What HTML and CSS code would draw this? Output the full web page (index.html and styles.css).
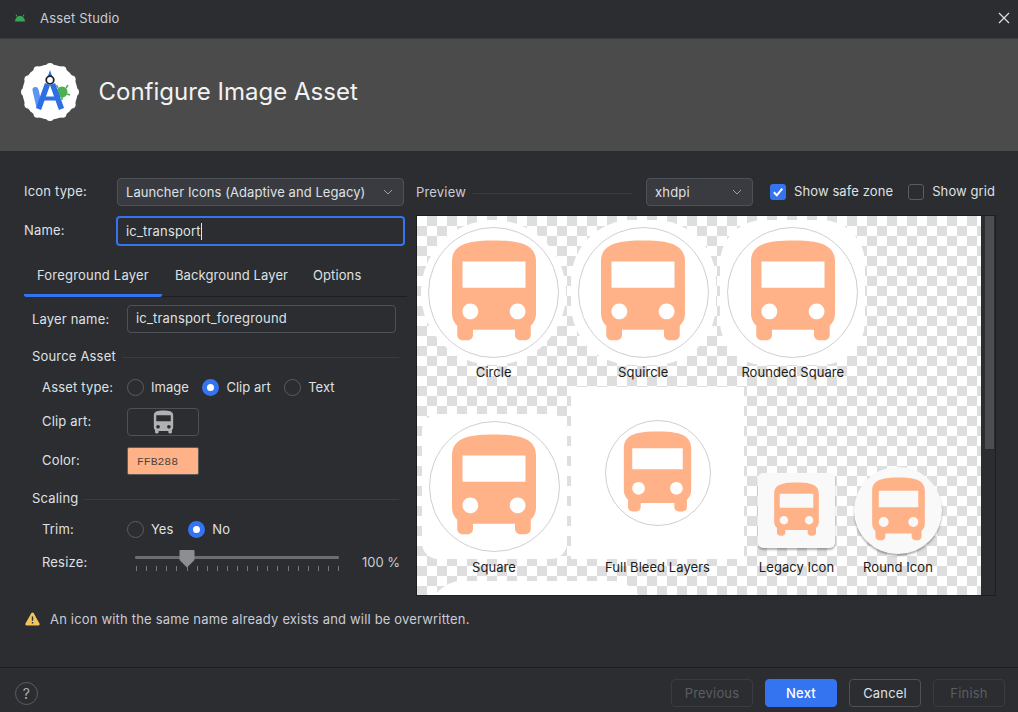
FILE: index.html
```html
<!DOCTYPE html>
<html>
<head>
    <title>Asset Studio</title>
    <link rel="stylesheet" href="styles.css">
</head>
<body>
    <svg class="defs" width="0" height="0">
        <symbol id="bus" viewBox="0 0 24 24">
            <path fill-rule="evenodd" d="M4 16c0 .88.39 1.67 1 2.22V20c0 .55.45 1 1 1h1c.55 0 1-.45 1-1v-1h8v1c0 .55.45 1 1 1h1c.55 0 1-.45 1-1v-1.78c.61-.55 1-1.34 1-2.22V6c0-3.5-3.58-4-8-4s-8 .5-8 4v10zm3.500 1c-.83 0-1.500-.67-1.500-1.500S6.670 14 7.500 14s1.500.67 1.500 1.500S8.330 17 7.500 17zm9 0c-.83 0-1.500-.67-1.500-1.500s.67-1.500 1.500-1.500 1.500.67 1.500 1.500-.67 1.500-1.500 1.500zm1.500-6H6V6h12v5z"/>
        </symbol>
    </svg>

    <div class="window">
        <div class="titlebar">
            <svg class="android-icon" width="12" height="9" viewBox="0 0 12 9">
                <path fill="#3aa655" d="M1 8.500C1 5.600 3.200 3 6 3s5 2.600 5 5.500z"/>
                <path stroke="#3aa655" stroke-width="1" d="M3.200 3.800 2 1.500M8.800 3.800 10 1.500"/>
            </svg>
            <span class="titlebar-text">Asset Studio</span>
            <svg class="close-icon" width="12" height="12" viewBox="0 0 12 12">
                <path stroke="#dfe1e5" stroke-width="1.200" d="M1 1l10 10M11 1 1 11"/>
            </svg>
        </div>

        <div class="header">
            <svg class="logo" width="60" height="60" viewBox="0 0 60 60">
                <g fill="#fff">
                    <circle cx="30" cy="30" r="27.500"/>
                    <circle cx="30" cy="5" r="4"/><circle cx="42.500" cy="8.350" r="4"/><circle cx="51.650" cy="17.500" r="4"/>
                    <circle cx="55" cy="30" r="4"/><circle cx="51.650" cy="42.500" r="4"/><circle cx="42.500" cy="51.650" r="4"/>
                    <circle cx="30" cy="55" r="4"/><circle cx="17.500" cy="51.650" r="4"/><circle cx="8.350" cy="42.500" r="4"/>
                    <circle cx="5" cy="30" r="4"/><circle cx="8.350" cy="17.500" r="4"/><circle cx="17.500" cy="8.350" r="4"/>
                </g>
                <circle cx="42" cy="30" r="5.500" fill="#4caf50"/>
                <path d="M38 26l-1.500-3M46 26l2-3M47 32l3 1M42 35v3" stroke="#4caf50" stroke-width="1.500"/>
                <path d="M15.500 28 19 43" stroke="#5b96f6" stroke-width="6" stroke-linecap="round"/>
                <path d="M30 8l3 9h-6z" fill="#2f6fe6"/>
                <path d="M27.500 22 18.500 47M32.500 22 41.500 47" stroke="#2f6fe6" stroke-width="5.500"/>
                <path d="M22 36.500H38" stroke="#2f6fe6" stroke-width="4"/>
                <circle cx="30" cy="18" r="3.800" fill="#fff" stroke="#222" stroke-width="1.800"/>
            </svg>
            <h1 class="header-title">Configure Image Asset</h1>
        </div>

        <div class="content">
            <div class="columns">
                <div class="form-col">
                    <div class="top-row">
                        <label class="top-label">Icon type:</label>
                        <div class="select select-wide">
                            <span>Launcher Icons (Adaptive and Legacy)</span>
                            <svg class="chevron" width="10" height="6" viewBox="0 0 10 6"><path d="M1 1l4 4 4-4"/></svg>
                        </div>
                    </div>
                    <div class="top-row name-row">
                        <label class="top-label">Name:</label>
                        <div class="name-input"><span>ic_transport</span><i class="caret"></i></div>
                    </div>

                    <div class="tabs">
                        <div class="tab tab-active">Foreground Layer</div>
                        <div class="tab tab-background">Background Layer</div>
                        <div class="tab">Options</div>
                    </div>

                    <div class="tab-pane">
                        <div class="layer-row">
                            <label class="layer-label">Layer name:</label>
                            <div class="text-input">ic_transport_foreground</div>
                        </div>

                        <div class="section section-source"><span>Source Asset</span><i></i></div>
                        <div class="row row-asset">
                            <label class="row-label">Asset type:</label>
                            <div class="radio-group">
                                <span class="radio"></span><span class="radio-text">Image</span>
                                <span class="radio radio-on"></span><span class="radio-text">Clip art</span>
                                <span class="radio"></span><span class="radio-text">Text</span>
                            </div>
                        </div>
                        <div class="row row-clip">
                            <label class="row-label">Clip art:</label>
                            <div class="clip-button">
                                <svg width="29" height="29" class="clip-bus"><use href="#bus"/></svg>
                            </div>
                        </div>
                        <div class="row row-color">
                            <label class="row-label">Color:</label>
                            <div class="color-swatch">FFB288</div>
                        </div>

                        <div class="section section-scaling"><span>Scaling</span><i></i></div>
                        <div class="row row-trim">
                            <label class="row-label">Trim:</label>
                            <div class="radio-group">
                                <span class="radio"></span><span class="radio-text">Yes</span>
                                <span class="radio radio-on"></span><span class="radio-text">No</span>
                            </div>
                        </div>
                        <div class="row row-resize">
                            <label class="row-label">Resize:</label>
                            <div class="slider">
                                <div class="slider-track"></div>
                                <div class="slider-ticks"></div>
                                <svg class="slider-thumb" width="16" height="18" viewBox="0 0 16 18">
                                    <path d="M1.500 0h13q1 0 1 1v9L8 17.500.5 10V1q0-1 1-1z" fill="#8c8e90"/>
                                </svg>
                            </div>
                            <span class="slider-value">100 %</span>
                        </div>
                    </div>
                </div>

                <div class="preview-col">
                    <div class="preview-top">
                        <div class="section preview-title"><span>Preview</span><i></i></div>
                        <div class="select select-density">
                            <span>xhdpi</span>
                            <svg class="chevron" width="10" height="6" viewBox="0 0 10 6"><path d="M1 1l4 4 4-4"/></svg>
                        </div>
                        <span class="checkbox checkbox-on">
                            <svg width="16" height="16" viewBox="0 0 16 16"><path d="M3.800 8.300l3 3 5.500-6.600" fill="none" stroke="#fff" stroke-width="2"/></svg>
                        </span>
                        <span class="check-text">Show safe zone</span>
                        <span class="checkbox checkbox-grid"></span>
                        <span class="check-text">Show grid</span>
                    </div>

                    <div class="preview-box">
                        <div class="canvas">
                            <div class="canvas-row canvas-row-first">
                                <div class="cell cell-top">
                                    <div class="shape shape-circle"><div class="safe-zone"><svg class="bus bus-lg"><use href="#bus"/></svg></div></div>
                                    <div class="cell-label">Circle</div>
                                </div>
                                <div class="cell cell-top">
                                    <div class="shape shape-squircle"><div class="safe-zone"><svg class="bus bus-lg"><use href="#bus"/></svg></div></div>
                                    <div class="cell-label">Squircle</div>
                                </div>
                                <div class="cell cell-top">
                                    <div class="shape shape-rounded"><div class="safe-zone"><svg class="bus bus-lg"><use href="#bus"/></svg></div></div>
                                    <div class="cell-label">Rounded Square</div>
                                </div>
                            </div>
                            <div class="canvas-row canvas-row-second">
                                <div class="cell cell-square">
                                    <div class="shape shape-square"><div class="safe-zone"><svg class="bus bus-lg"><use href="#bus"/></svg></div></div>
                                    <div class="cell-label">Square</div>
                                </div>
                                <div class="cell cell-bleed">
                                    <div class="shape shape-bleed"><div class="safe-zone safe-zone-md"><svg class="bus bus-md"><use href="#bus"/></svg></div></div>
                                    <div class="cell-label">Full Bleed Layers</div>
                                </div>
                                <div class="cell cell-legacy">
                                    <div class="shape shape-legacy"><svg class="bus bus-sm"><use href="#bus"/></svg></div>
                                    <div class="cell-label">Legacy Icon</div>
                                </div>
                                <div class="cell cell-round">
                                    <div class="shape shape-round"><svg class="bus bus-round"><use href="#bus"/></svg></div>
                                    <div class="cell-label">Round Icon</div>
                                </div>
                            </div>
                            <div class="shape shape-next"></div>
                        </div>
                        <div class="scrollbar"><div class="scrollbar-thumb"></div></div>
                    </div>
                </div>
            </div>

            <div class="warning">
                <svg width="15" height="14" viewBox="0 0 15 14">
                    <path d="M6.400 1.100a1.300 1.300 0 0 1 2.200 0l5.900 10.500a1.300 1.300 0 0 1-1.100 1.900H1.600a1.300 1.300 0 0 1-1.100-1.900z" fill="#f2c55c"/>
                    <path d="M6.800 4.500h1.400v4.300H6.800zM6.800 9.900h1.400v1.500H6.800z" fill="#2b2d30"/>
                </svg>
                <span>An icon with the same name already exists and will be overwritten.</span>
            </div>
        </div>

        <div class="footer">
            <div class="help">?</div>
            <div class="footer-buttons">
                <button class="btn btn-disabled btn-prev">Previous</button>
                <button class="btn btn-primary">Next</button>
                <button class="btn">Cancel</button>
                <button class="btn btn-disabled">Finish</button>
            </div>
        </div>
    </div>
</body>
</html>
```

FILE: styles.css
```css
* {
    box-sizing: border-box;
}

body {
    margin: 0;
    background-color: #2b2d30;
    color: #dfe1e5;
    font-family: Inter, "Noto Sans", sans-serif;
    font-size: 13px;
    line-height: 14px;
    letter-spacing: 0.18px;
}

.defs {
    position: absolute;
}

.window {
    width: 1018px;
    height: 712px;
    display: flex;
    flex-direction: column;
    overflow: hidden;
}

/* title bar */
.titlebar {
    height: 39px;
    flex: none;
    display: flex;
    align-items: center;
    padding: 0 8px 3px 14px;
    border-bottom: 1px solid #393b40;
}

.titlebar-text {
    margin-left: 14px;
    color: #c9ccd6;
}

.close-icon {
    margin-left: auto;
}

/* header */
.header {
    height: 112px;
    flex: none;
    display: flex;
    align-items: center;
    padding: 0 0 6px 20px;
    background-color: #4b4b4b;
}

.header-title {
    margin: 0 0 0 18.500px;
    font-size: 24px;
    line-height: 28px;
    font-weight: 400;
    letter-spacing: 0;
    color: #f2f2f2;
}

/* main area */
.content {
    flex: 1;
    padding-top: 27px;
}

.columns {
    display: flex;
}

.form-col {
    width: 416px;
    flex: none;
    padding-left: 24px;
}

.top-row {
    display: flex;
    align-items: center;
    height: 28px;
}

.name-row {
    height: 30px;
    margin-top: 10px;
}

.top-label {
    width: 92px;
    flex: none;
    margin-top: -2px;
}

.select {
    display: flex;
    align-items: center;
    justify-content: space-between;
    height: 28px;
    padding: 0 10px 0 8px;
    background-color: #393b40;
    border: 1px solid #4e5157;
    border-radius: 4px;
}

.select-wide {
    width: 287px;
    margin-left: 1px;
    letter-spacing: 0.07px;
}

.select-density {
    width: 107px;
    flex: none;
}

.chevron path {
    fill: none;
    stroke: #9da0a8;
    stroke-width: 1;
}

.name-input {
    width: 289px;
    height: 30px;
    display: flex;
    align-items: center;
    padding-left: 8px;
    border: 2px solid #3574f0;
    border-radius: 4px;
}

.caret {
    width: 1px;
    height: 17px;
    background-color: #dfe1e5;
}

/* tabs */
.tabs {
    display: flex;
    width: 383px;
    height: 42px;
    margin-top: 9px;
    border-bottom: 1px solid #1e1f22;
}

.tab {
    padding: 13px 0 0 13px;
    height: 42px;
    white-space: nowrap;
    letter-spacing: 0.1px;
}

.tab-active {
    width: 138px;
    border-bottom: 3px solid #3574f0;
    border-radius: 0 0 2px 2px;
    letter-spacing: 0.2px;
}

.tab-background {
    width: 138px;
}

.tab-pane {
    padding-left: 8px;
    width: 375px;
}

.layer-row {
    display: flex;
    align-items: center;
    height: 28px;
    margin-top: 8px;
}

.layer-label {
    width: 95px;
    flex: none;
}

.text-input {
    width: 269px;
    height: 28px;
    padding: 5px 8px;
    border: 1px solid #4e5157;
    border-radius: 4px;
}

/* titled separators */
.section {
    display: flex;
    align-items: center;
}

.section i {
    flex: 1;
    height: 1px;
    margin: 2px 0 0 6px;
    background-color: #393b40;
}

.section-source {
    margin-top: 16px;
}

.section-scaling {
    margin-top: 16px;
}

/* form rows */
.row {
    display: flex;
    align-items: center;
    height: 28px;
    padding-left: 10px;
}

.row-label {
    width: 85px;
    flex: none;
}

.row-asset {
    margin-top: 10px;
}

.row-clip {
    margin-top: 7px;
}

.row-color {
    margin-top: 11px;
}

.row-clip .row-label,
.row-color .row-label {
    margin-top: -2px;
}

.row-trim {
    margin-top: 10px;
}

.row-resize {
    margin-top: 5px;
}

.radio-group {
    display: flex;
    align-items: center;
}

.radio {
    width: 17px;
    height: 17px;
    flex: none;
    border: 1px solid #5a5d63;
    border-radius: 50%;
}

.radio-on {
    border: 5px solid #3574f0;
    background-color: #fff;
}

.radio-text {
    margin: 0 13.500px 0 7px;
    letter-spacing: 0.03px;
}

.row-trim .radio-text {
    margin-right: 15px;
}

.clip-button {
    width: 72px;
    height: 28px;
    display: flex;
    align-items: center;
    justify-content: center;
    border: 1px solid #4e5157;
    border-radius: 4px;
}

.clip-bus {
    flex: none;
    fill: #afb1b3;
}

.color-swatch {
    width: 72px;
    height: 28px;
    padding: 8px 9px;
    background-color: #ffb288;
    border: 1px solid #5e5a58;
    border-radius: 2px;
    color: #4d4540;
    font-family: "Liberation Mono", monospace;
    font-size: 11.400px;
    line-height: 13px;
    letter-spacing: 0;
}

/* slider */
.slider {
    position: relative;
    width: 204px;
    height: 28px;
    flex: none;
    margin-left: 8px;
}

.slider-track {
    height: 3px;
    margin-top: 8px;
    background-color: #6b6d70;
    border-radius: 1px;
}

.slider-ticks {
    height: 5px;
    margin-top: 7px;
    margin-left: 1px;
    background-image: repeating-linear-gradient(to right, #77797c 0, #77797c 1px, transparent 1px, transparent 10.100px);
}

.slider-thumb {
    position: absolute;
    left: 44px;
    top: 2px;
}

.slider-value {
    margin-left: 23px;
    flex: none;
    white-space: nowrap;
    letter-spacing: 0;
    color: #c9ccd6;
}

/* preview column */
.preview-col {
    width: 580px;
    flex: none;
}

.preview-top {
    display: flex;
    align-items: center;
    height: 28px;
}

.preview-title {
    width: 216px;
    flex: none;
    margin-right: 14px;
    color: #c9ccd6;
}

.preview-title i {
    margin-left: 7px;
}

.checkbox {
    width: 16px;
    height: 16px;
    flex: none;
    margin-left: 17px;
    border: 1px solid #5a5d63;
    border-radius: 3px;
}

.checkbox-on {
    border: 0;
    background-color: #3574f0;
}

.checkbox-on svg {
    display: block;
}

.checkbox-grid {
    margin-left: 15px;
}

.check-text {
    margin-left: 8px;
    margin-top: -2px;
    white-space: nowrap;
    letter-spacing: 0.1px;
}

.preview-box {
    display: flex;
    height: 381px;
    margin-top: 9px;
    border: 1px solid #1e1f22;
}

.canvas {
    width: 564px;
    height: 379px;
    flex: none;
    overflow: hidden;
    color: #1b1b1b;
    letter-spacing: 0.05px;
    background-color: #fff;
    background-image: conic-gradient(#dedede 25%, #fff 0 50%, #dedede 0 75%, #fff 0);
    background-size: 20px 20px;
}

.scrollbar {
    flex: 1;
    padding-left: 4px;
    padding-right: 1px;
    background-color: #2b2d30;
}

.scrollbar-thumb {
    height: 233px;
    background-color: #4c4d51;
}

/* preview cells */
.canvas-row {
    display: flex;
}

.canvas-row-first {
    padding: 4px 0 0 2px;
}

.canvas-row-second {
    align-items: flex-end;
    margin-top: 8px;
    padding-left: 4px;
}

.cell {
    display: flex;
    flex-direction: column;
    align-items: center;
    flex: none;
}

.cell-top {
    width: 149.500px;
}

.cell-square {
    width: 146px;
}

.cell-bleed {
    width: 173px;
    margin-left: 4px;
}

.cell-legacy {
    width: 77px;
    margin-left: 14px;
}

.cell-round {
    width: 88px;
    margin-left: 19px;
}

.cell-label {
    height: 14px;
    white-space: nowrap;
}

.shape {
    display: flex;
    align-items: center;
    justify-content: center;
    width: 145px;
    height: 145px;
    flex: none;
    background-color: #fff;
}

.shape-circle {
    border-radius: 50%;
}

.shape-squircle {
    border-radius: 42%;
}

.shape-rounded {
    border-radius: 30%;
}

.shape-square {
    margin-bottom: 1px;
    border-radius: 16px;
}

.shape-bleed {
    width: 173px;
    height: 172px;
    margin-bottom: 1px;
}

.shape-legacy {
    width: 77px;
    height: 75px;
    margin-bottom: 12px;
    border-radius: 5px;
    background-color: #f9f9f9;
    box-shadow: 0 2px 2px rgba(0, 0, 0, 0.3);
}

.shape-round {
    width: 88px;
    height: 87px;
    margin-bottom: 6px;
    border-radius: 50%;
    background-color: #f9f9f9;
    box-shadow: 0 2px 2px rgba(0, 0, 0, 0.3);
}

.shape-next {
    width: 214px;
    height: 198px;
    margin: 7px 0 0 13px;
    border-radius: 32px;
}

.safe-zone {
    display: flex;
    align-items: center;
    justify-content: center;
    width: 131px;
    height: 131px;
    flex: none;
    border: 1px solid #cfcfcf;
    border-radius: 50%;
}

.safe-zone-md {
    width: 106px;
    height: 106px;
}

.bus {
    fill: #ffb288;
    flex: none;
}

.bus-lg {
    width: 126px;
    height: 126px;
}

.bus-md {
    width: 101px;
    height: 101px;
}

.bus-sm {
    width: 67px;
    height: 67px;
}

.bus-round {
    width: 79px;
    height: 79px;
}

/* warning */
.warning {
    display: flex;
    align-items: center;
    margin-top: 16px;
    padding-left: 25px;
}

.warning span {
    margin-left: 10px;
    color: #c9ccd6;
}

/* footer */
.footer {
    height: 45px;
    flex: none;
    display: flex;
    align-items: center;
    justify-content: space-between;
    padding: 11px 13px 5px 15px;
    border-top: 1px solid #1e1f22;
}

.help {
    width: 23px;
    height: 23px;
    border: 1px solid #5a5d63;
    border-radius: 50%;
    text-align: center;
    line-height: 21px;
    font-size: 14px;
    color: #a8adbd;
}

.footer-buttons {
    display: flex;
    gap: 12px;
}

.btn {
    width: 72px;
    height: 28px;
    padding: 0;
    background: none;
    border: 1px solid #4e5157;
    border-radius: 4px;
    color: #dfe1e5;
    font-family: inherit;
    font-size: 13px;
    letter-spacing: 0.18px;
}

.btn-prev {
    width: 82px;
}

.btn-disabled {
    border-color: #393b40;
    color: #5a5d63;
}

.btn-primary {
    background-color: #3574f0;
    border-color: #3574f0;
    color: #fff;
    font-weight: 500;
}
```
